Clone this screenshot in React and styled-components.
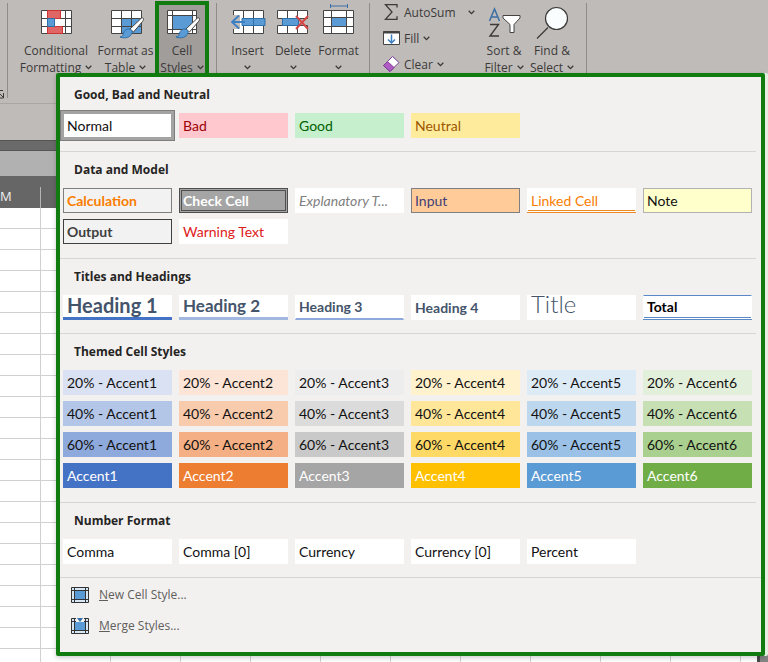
import React, { useState } from "react"
import styled, { createGlobalStyle } from "styled-components"

const GlobalStyle = createGlobalStyle`
* { box-sizing: border-box; }
body {
  margin: 0;
  background: #fff;
  font-family: "Open Sans", "Noto Sans", sans-serif;
  font-size: 12px;
  color: #3b3a39;
}
button { font: inherit; color: inherit; }
`

const Window = styled.div`
position: relative;
display: flex;
flex-direction: column;
min-height: 100vh;
overflow: hidden;
`

/* ---------- ribbon ---------- */

const Ribbon = styled.div`
display: flex;
height: 104px;
background: #bfbbb8;
border-bottom: 1px solid #a9a6a3;
`

const Launcher = styled.button`
display: flex;
align-items: flex-end;
width: 7px;
padding: 0 0 4px;
border: none;
background: none;
`

const Group = styled.div`
display: flex;
align-items: flex-start;
margin: 3px 0 5px;
padding: 0 ${props => props.$right || 0}px 0 ${props => props.$left || 0}px;
border-left: 1px solid #8f8c8a;
`

const BigButton = styled.button`
display: flex;
flex-direction: column;
align-items: center;
width: ${props => props.$width}px;
height: 73px;
padding: 3px 0 0;
border: none;
background: none;
line-height: 17px;
white-space: nowrap;

svg.icon {
  margin-bottom: 4px;
  overflow: visible;
}
`

const ActiveButton = styled(BigButton)`
margin-top: -2px;
height: 80px;
padding-top: 1px;
border: 4px solid #107c10;
background: #a09d9b;
`

const Line = styled.span`
display: flex;
align-items: center;
gap: 4px;
min-height: 17px;
`

const SmallButtons = styled.div`
display: flex;
flex-direction: column;
gap: 8px;
width: 98px;
`

const SmallButton = styled.button`
display: flex;
align-items: center;
gap: 4px;
height: 18px;
padding: 0;
border: none;
background: none;
white-space: nowrap;

svg { flex: none; }
.wide { margin-left: 8px; }
`

const Divider = styled.div`
margin: 3px 0 5px;
border-left: 1px solid #8f8c8a;
`

/* ---------- sheet ---------- */

const RibbonFoot = styled.div`
height: 36px;
background: #bfbbb8;
`

const DarkBand = styled.div`
height: 11px;
background: #6a6a6a;
border-top: 1px solid #555;
border-bottom: 1px solid #555;
`

const FormulaBar = styled.div`
height: 25px;
background: #b1b1b1;
`

const ColumnHeads = styled.div`
display: flex;
height: 32px;
padding-top: 11px;
background: #666;
color: #eee;
font-size: 13px;
`

const ColumnHead = styled.div`
width: 41px;
border-right: 1px solid #b5b5b5;
`

const SheetArea = styled.div`
display: flex;
flex: 1;
`

const Cells = styled.div`
flex: 1;
background-color: #fff;
background-image:
  linear-gradient(to top, #d0d0d0 1px, transparent 1px),
  linear-gradient(to left, #d0d0d0 1px, transparent 1px);
background-size: 100% 21px, 70px 100%;
background-position: 0 0, 41px 0;
`

const ScrollTrack = styled.div`
width: 11px;
background: #858585;
border-left: 3px solid #4a4a4a;
`

/* ---------- cell styles menu ---------- */

const Menu = styled.div`
position: absolute;
top: 73px;
left: 56px;
right: 3px;
border: 4px solid #107c10;
border-radius: 2px;
background: #f3f1f0;
box-shadow: 3px 0 0 #e3f0e1, 0 2px 5px rgba(0, 0, 0, .2);
`

const Section = styled.section`
margin-right: 5px;
padding: 0 4px ${props => (props.$tall ? 14 : 13)}px 3px;
border-bottom: 1px solid #d8d6d5;

&:last-of-type {
  margin-right: 0;
  padding-right: 9px;
}
`

const SectionTitle = styled.h2`
margin: 0;
padding: 9px 0 0 11px;
height: 36px;
font-size: 12px;
font-weight: 700;
line-height: 18px;
color: #252423;
`

const Grid = styled.div`
display: grid;
grid-template-columns: repeat(6, 1fr);
gap: 6px 7px;
`

const Swatch = styled.button`
min-width: 0;
height: 25px;
padding: 0 0 0 3px;
border: 1px solid transparent;
background: #fff;
background-clip: border-box;
color: #111;
font-family: Lato, "Open Sans", sans-serif;
font-size: 14px;
line-height: 22px;
text-align: left;
white-space: nowrap;
${props => props.$look}
`

const MenuItem = styled.button`
display: flex;
align-items: center;
gap: 10px;
width: 100%;
height: 31px;
padding: 0 0 0 11px;
border: none;
background: none;
color: #605e5c;

&:hover { background: #e1dfdd; }
`

const MenuFoot = styled.div`
padding: 1px 0 11px;
`

/* ---------- icons ---------- */

const Chevron = ({ className }) => (
    <svg className={className} width="7" height="5" viewBox="0 0 7 5" fill="none" stroke="#3b3a39" strokeWidth="1.3">
        <path d="M.7 .8 3.5 3.6 6.3 .8" />
    </svg>
)

const Brush = () => (
    <g>
        <path d="M33 12c1 1 .5 2-.5 3.500L23.500 26l-3.500-3L30.500 13c1-1 1.800-1.500 2.500-1z" fill="#fff" stroke="#444" />
        <path d="M19 23c2.500 .5 3.500 2 3 4-1.500 4.500-7 6-12 4 3-.5 3-2 3.500-4 .8-2.500 3-4.500 5.500-4z" fill="#5b9bd5" stroke="#2f6fa8" />
    </g>
)

const ConditionalIcon = () => (
    <svg className="icon" width="32" height="32" viewBox="0 0 32 32">
        <path d="M1.500 4.500h30v23h-30z" fill="#fff" />
        <path d="M1.500 4.500h30v23h-30zM1.500 12.500h30M1.500 20.500h30M7.500 4v24M25.500 4v24" fill="none" stroke="#444" />
        <path d="M7.500 4.500h13v8h-13zM7.500 20.500h15v7h-15z" fill="#e06666" stroke="#c33" />
        <path d="M7.500 12.500h7v8h-7z" fill="#5b9bd5" stroke="#2f6fa8" />
    </svg>
)

const FormatTableIcon = () => (
    <svg className="icon" width="32" height="32" viewBox="0 0 32 32">
        <path d="M1.500 4.500h30v23h-30z" fill="#fff" />
        <path d="M11.500 12.500h20v15h-20z" fill="#5b9bd5" />
        <path d="M1.500 4.500h30v23h-30zM1.500 12.500h30M1.500 20.500h30M11.500 4v24M21.500 4v24" fill="none" stroke="#444" />
        <Brush />
    </svg>
)

const CellStylesIcon = () => (
    <svg className="icon" width="32" height="32" viewBox="0 0 32 32">
        <path d="M1.500 4.500h29v23h-29z" fill="#fff" />
        <path d="M6.500 9.500h20v14h-20z" fill="#5b9bd5" />
        <path d="M1.500 4.500h29v23h-29zM1 9.500h30M1 23.500h30M6.500 4v24M26.500 4v24" fill="none" stroke="#444" />
        <Brush />
    </svg>
)

const InsertIcon = () => (
    <svg className="icon" width="36" height="32" viewBox="0 0 36 32">
        <path d="M3.500 4.500h30v23h-30z" fill="#fff" stroke="#444" />
        <path d="M13.500 4v24M23.500 4v24" stroke="#444" />
        <path d="M12 12.500h23v7H12z" fill="#5b9bd5" stroke="#2f6fa8" />
        <path d="M23.500 12v8" stroke="#2f6fa8" />
        <path d="M1 9h9v14H1z" fill="#bfbbb8" />
        <path d="M9 9.500 2 16l7 6.500M2 16h13" fill="none" stroke="#3b7fc4" strokeWidth="1.800" />
    </svg>
)

const DeleteIcon = () => (
    <svg className="icon" width="36" height="32" viewBox="0 0 36 32">
        <path d="M2.500 4.500h30v8h-30zM2.500 19.500h30v8h-30z" fill="#fff" stroke="#444" />
        <path d="M12.500 4v8M22.500 4v8M12.500 20v8M22.500 20v8" stroke="#444" />
        <path d="M7.500 12.500h16v7h-16z" fill="#5b9bd5" stroke="#2f6fa8" />
        <path d="m21 10 12 13M33 10 21 23" stroke="#d64545" strokeWidth="2" />
    </svg>
)

const FormatIcon = () => (
    <svg className="icon" width="36" height="32" viewBox="0 0 36 32">
        <path d="M9.500-2v4M26.500-2v4M9.500 0h17" stroke="#3b6ea5" />
        <path d="M2.500 4.500h30v23h-30z" fill="#fff" />
        <path d="M10 12h16v8H10z" fill="#5b9bd5" />
        <path d="M2.500 4.500h30v23h-30zM2 11.500h31M2 20.500h31M10.500 4v24M25.500 4v24" fill="none" stroke="#444" />
    </svg>
)

const SumIcon = () => (
    <svg width="18" height="18" viewBox="0 0 18 18" fill="none" stroke="#3b3a39" strokeWidth="1.300">
        <path d="M15 4.500V1.700H3.500L10 9l-6.500 7.300H15v-3" />
    </svg>
)

const FillIcon = () => (
    <svg width="18" height="18" viewBox="0 0 18 18" fill="none">
        <path d="M1.500 2.500h16v13h-16z" fill="#fff" stroke="#444" />
        <path d="M1 3.500h17" stroke="#444" strokeWidth="2" />
        <path d="M9.500 5.500V14M6 10.500l3.500 3.500 3.500-3.500" stroke="#3b7fc4" strokeWidth="1.500" />
    </svg>
)

const ClearIcon = () => (
    <svg width="18" height="18" viewBox="0 0 18 18">
        <path d="M10.500 1.500 17 7.500 8 16.500 1.500 10.500z" fill="#fff" stroke="#7d3c98" />
        <path d="M5.500 6.500 12 12.500 8 16.500 1.500 10.500z" fill="#b15cc4" stroke="#7d3c98" />
    </svg>
)

const SortIcon = () => (
    <svg className="icon" width="34" height="32" viewBox="0 0 34 32" fill="none">
        <path d="M2.500 15 7.500 3l5 12M4.300 11h6.400" stroke="#3b6ea5" strokeWidth="1.500" />
        <path d="M3 18.500h8.500L3 30h9" stroke="#3b3a39" strokeWidth="1.400" />
        <path d="M16 9.500h17v2.500l-6 6.500v8h-4v-8l-7-6.500z" fill="#fff" stroke="#444" />
    </svg>
)

const FindIcon = () => (
    <svg className="icon" width="34" height="32" viewBox="0 0 34 32">
        <path d="M13 21.500 2 32.500" stroke="#3b3a39" strokeWidth="1.300" />
        <circle cx="21.500" cy="12.500" r="11" fill="#fafdfd" stroke="#3b3a39" strokeWidth="1.200" />
    </svg>
)

const LauncherIcon = () => (
    <svg width="5" height="9" viewBox="0 0 5 9" fill="none" stroke="#3b3a39">
        <path d="M0 .5h3M0 4l3.500 3.500M3.500 3v5H0" />
    </svg>
)

const StyleIcon = ({ merge }) => (
    <svg width="18" height="16" viewBox="0 0 18 16">
        <path d="M.5 .5h17v15H.5z" fill="#d6e6f5" />
        <path d="M4 4h10v8H4z" fill="#5b9bd5" />
        <path d="M.5 .5h17v15H.5zM0 3.500h18M0 12.500h18M3.500 0v16M14.500 0v16" fill="none" stroke="#333" />
        {merge ? <path d="M5 0h8v4H5z" fill="#f3f1f0" /> : null}
        {merge ? <path d="M6 0h6L9 4z" fill="#2f6fa8" /> : null}
    </svg>
)

/* ---------- data ---------- */

const bg = (background, color = "#111") => ({ background, color })
const accents = ["Accent1", "Accent2", "Accent3", "Accent4", "Accent5", "Accent6"]
const shades = [
    ["20% - ", "#111", ["#d9e1f2", "#fce4d6", "#ededed", "#fff2cc", "#ddebf7", "#e2efda"]],
    ["40% - ", "#111", ["#b4c6e7", "#f8cbad", "#dbdbdb", "#ffe699", "#bdd7ee", "#c6e0b4"]],
    ["60% - ", "#111", ["#8ea9db", "#f4b084", "#c9c9c9", "#ffd966", "#9bc2e6", "#a9d08e"]],
    ["", "#fff", ["#4472c4", "#ed7d31", "#a5a5a5", "#ffc000", "#5b9bd5", "#70ad47"]],
]

const sections = [
    {
        title: "Good, Bad and Neutral",
        items: [
            ["Normal", {}],
            ["Bad", bg("#ffc7ce", "#9c0006")],
            ["Good", bg("#c6efce", "#006100")],
            ["Neutral", bg("#ffeb9c", "#9c5700")],
        ],
    },
    {
        title: "Data and Model",
        tall: true,
        items: [
            ["Calculation", { background: "#f2f2f2", color: "#fa7d00", fontWeight: 700, borderColor: "#7f7f7f" }],
            ["Check Cell", { background: "#a5a5a5", color: "#fff", fontWeight: 700, border: "3px double #4f4f4f", paddingLeft: "1px", lineHeight: "18px" }],
            ["Explanatory T...", { color: "#7f7f7f", fontStyle: "italic" }],
            ["Input", { background: "#ffcc99", color: "#3f3f76", borderColor: "#7f7f7f" }],
            ["Linked Cell", { color: "#fa7d00", borderTop: "3px solid #fff", borderBottom: "3px double #f08a24", lineHeight: "18px" }],
            ["Note", { background: "#ffffcc", borderColor: "#b2b2b2" }],
            ["Output", { background: "#f2f2f2", color: "#3f3f3f", fontWeight: 700, borderColor: "#3f3f3f" }],
            ["Warning Text", { color: "#e02020" }],
        ],
    },
    {
        title: "Titles and Headings",
        items: [
            ["Heading 1", { color: "#44546a", fontWeight: 700, fontSize: "20px", paddingBottom: "3px", lineHeight: "18px", borderWidth: "0 0 3px", paddingLeft: "4px", borderBottomColor: "#4472c4" }],
            ["Heading 2", { color: "#44546a", fontWeight: 700, fontSize: "17px", lineHeight: "18px", borderWidth: "0 0 3px", paddingLeft: "4px", borderBottomColor: "#a2b8e1" }],
            ["Heading 3", { color: "#44546a", fontWeight: 700, borderBottom: "2px solid #8ea9db" }],
            ["Heading 4", { color: "#44546a", fontWeight: 700 }],
            ["Title", { color: "#44546a", fontWeight: 300, fontSize: "24px", lineHeight: "16px", paddingBottom: "7px" }],
            ["Total", { color: "#000", fontWeight: 700, lineHeight: "18px", borderTop: "1px solid #5b88c8", borderBottom: "3px double #5b88c8" }],
        ],
    },
    {
        title: "Themed Cell Styles",
        tall: true,
        items: shades.flatMap(([prefix, color, fills]) =>
            fills.map((fill, i) => [prefix + accents[i], bg(fill, color)])
        ),
    },
    {
        title: "Number Format",
        items: ["Comma", "Comma [0]", "Currency", "Currency [0]", "Percent"].map(name => [name, {}]),
    },
]

const selectedLook = { boxShadow: "0 0 0 2px #a3a3a3, 0 0 0 3px #7d7d7d", borderColor: "#a3a3a3" }

const CellStylesMenu = () => {
    const [selected, setSelected] = useState("Normal")

    return (
        <Menu>
            {sections.map(({ title, tall, items }) => (
                <Section key={title} $tall={tall}>
                    <SectionTitle>{title}</SectionTitle>
                    <Grid>
                        {items.map(([name, look]) => (
                            <Swatch
                                key={name}
                                $look={name === selected ? { ...look, ...selectedLook } : look}
                                onClick={() => setSelected(name)}
                            >
                                {name}
                            </Swatch>
                        ))}
                    </Grid>
                </Section>
            ))}
            <MenuFoot>
                <MenuItem><StyleIcon /><span><u>N</u>ew Cell Style...</span></MenuItem>
                <MenuItem><StyleIcon merge /><span><u>M</u>erge Styles...</span></MenuItem>
            </MenuFoot>
        </Menu>
    )
}

const App = () => {
    const [open, setOpen] = useState(true)

    return (
        <Window>
            <GlobalStyle />
            <Ribbon>
                <Launcher aria-label="Alignment settings"><LauncherIcon /></Launcher>
                <Group $left={8} $right={7}>
                    <BigButton $width={80}>
                        <ConditionalIcon />
                        <Line>Conditional</Line>
                        <Line>Formatting <Chevron /></Line>
                    </BigButton>
                    <BigButton $width={59}>
                        <FormatTableIcon />
                        <Line>Format as</Line>
                        <Line>Table <Chevron /></Line>
                    </BigButton>
                    <ActiveButton $width={54} onClick={() => setOpen(!open)}>
                        <CellStylesIcon />
                        <Line>Cell</Line>
                        <Line>Styles <Chevron /></Line>
                    </ActiveButton>
                </Group>
                <Group $left={8} $right={8}>
                    <BigButton $width={45}>
                        <InsertIcon />
                        <Line>Insert</Line>
                        <Line><Chevron /></Line>
                    </BigButton>
                    <BigButton $width={46}>
                        <DeleteIcon />
                        <Line>Delete</Line>
                        <Line><Chevron /></Line>
                    </BigButton>
                    <BigButton $width={45}>
                        <FormatIcon />
                        <Line>Format</Line>
                        <Line><Chevron /></Line>
                    </BigButton>
                </Group>
                <Group $left={12} $right={10}>
                    <SmallButtons>
                        <SmallButton><SumIcon />AutoSum <Chevron className="wide" /></SmallButton>
                        <SmallButton><FillIcon />Fill <Chevron /></SmallButton>
                        <SmallButton><ClearIcon />Clear <Chevron /></SmallButton>
                    </SmallButtons>
                    <BigButton $width={48}>
                        <SortIcon />
                        <Line>Sort &amp;</Line>
                        <Line>Filter <Chevron /></Line>
                    </BigButton>
                    <BigButton $width={48}>
                        <FindIcon />
                        <Line>Find &amp;</Line>
                        <Line>Select <Chevron /></Line>
                    </BigButton>
                </Group>
                <Divider />
            </Ribbon>
            <RibbonFoot />
            <DarkBand />
            <FormulaBar />
            <ColumnHeads>
                <ColumnHead>M</ColumnHead>
            </ColumnHeads>
            <SheetArea>
                <Cells />
                <ScrollTrack />
            </SheetArea>
            {open ? <CellStylesMenu /> : null}
        </Window>
    )
}

export default App
